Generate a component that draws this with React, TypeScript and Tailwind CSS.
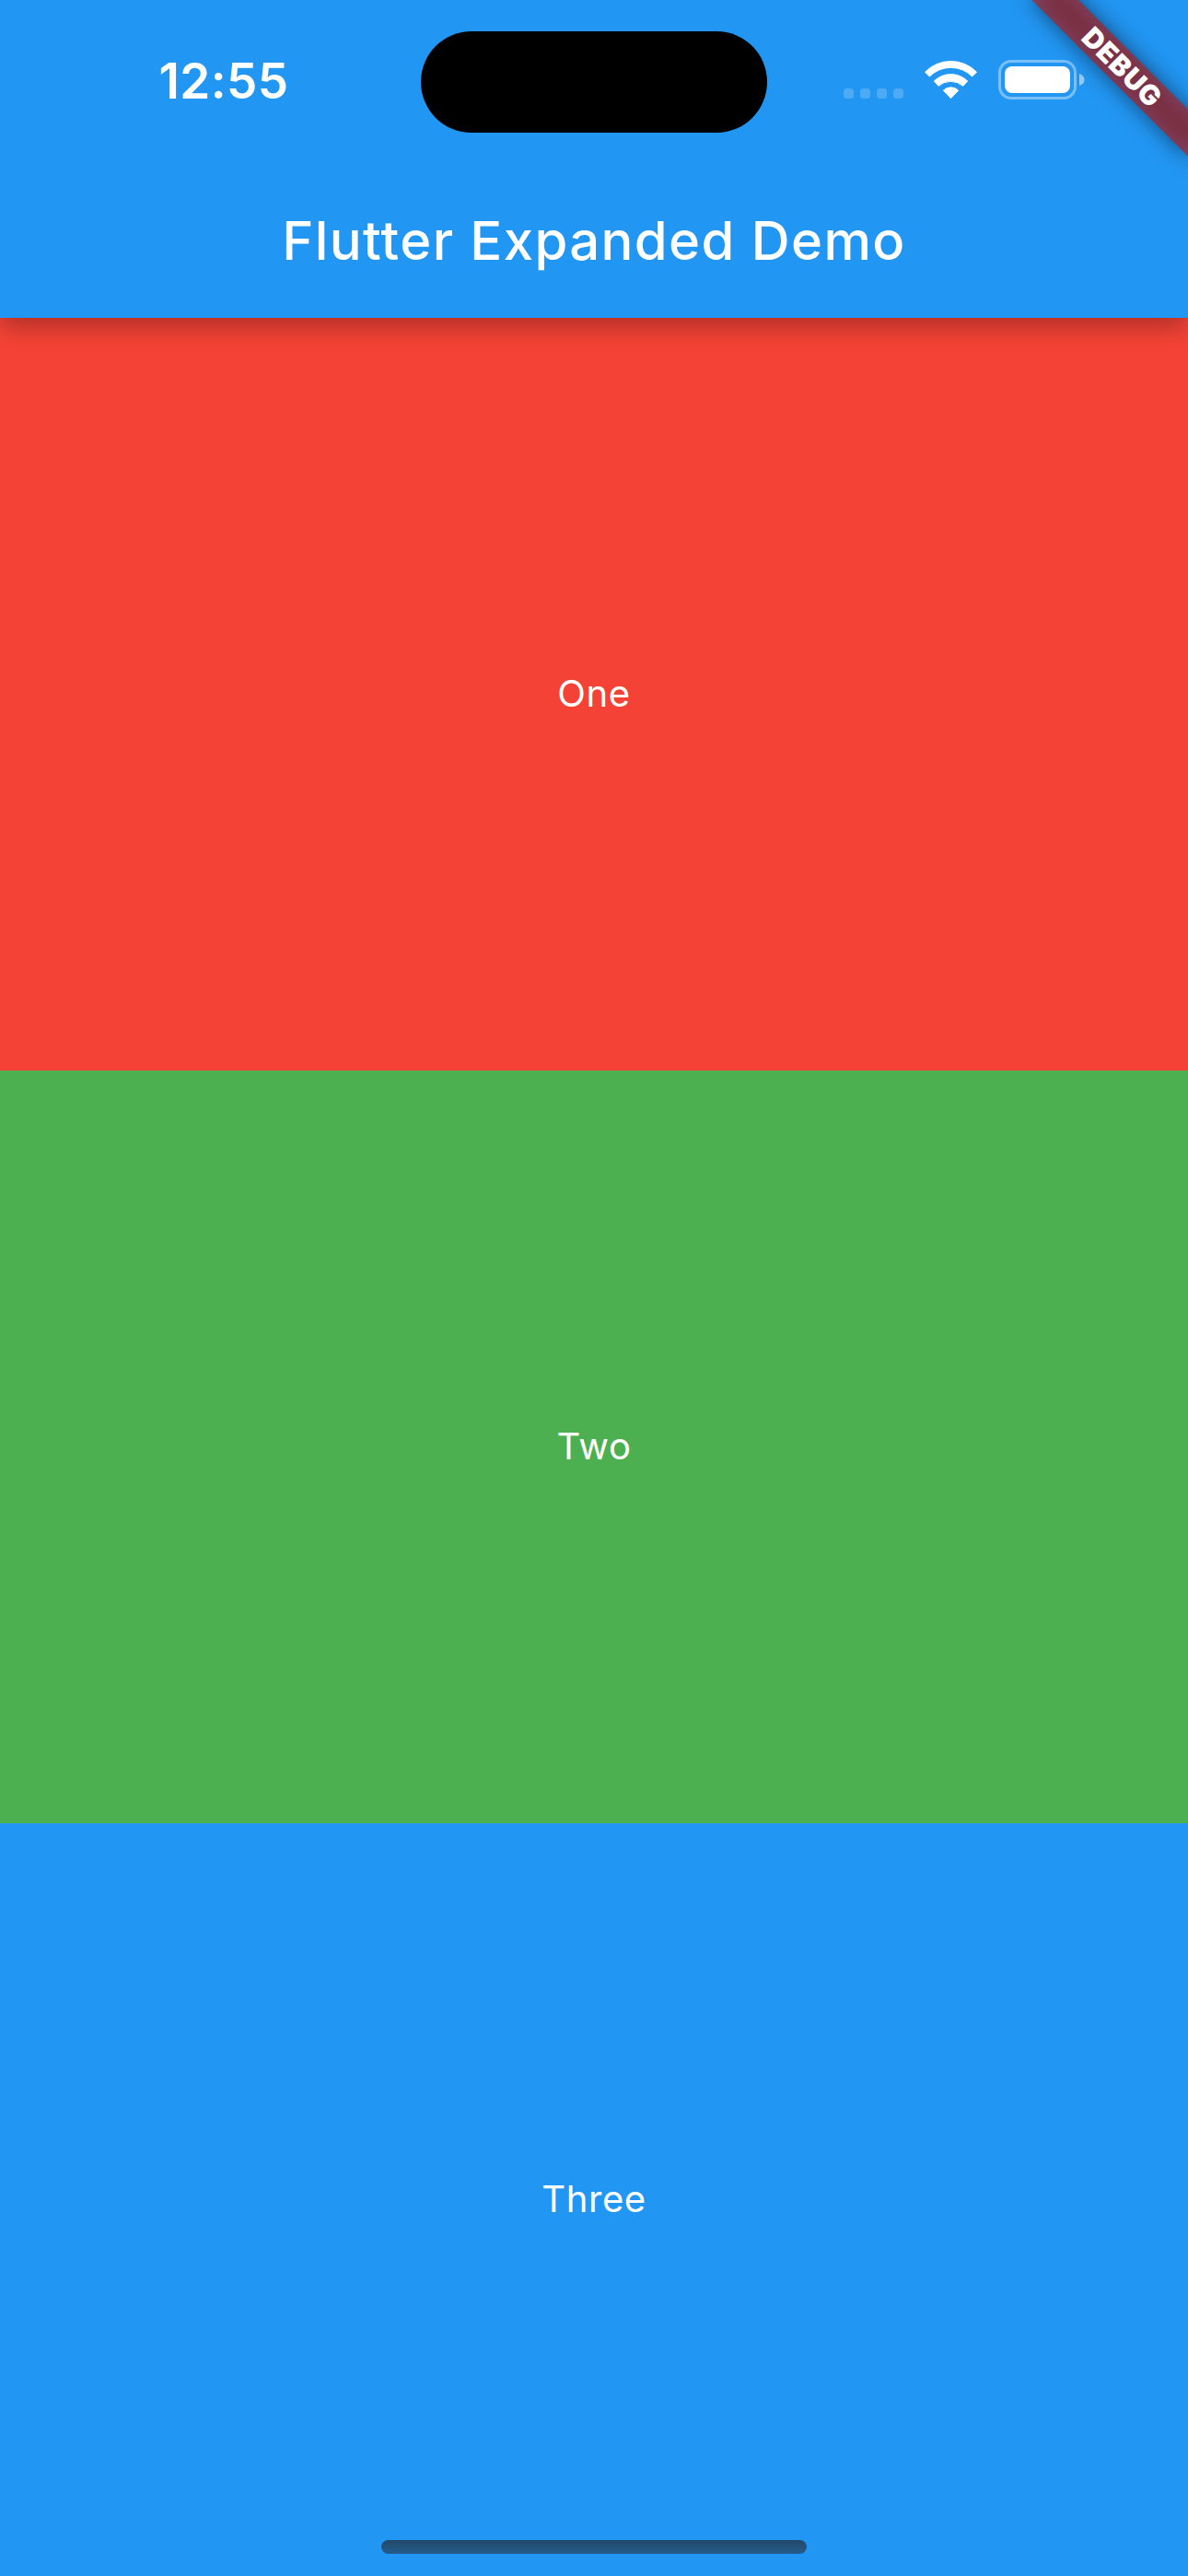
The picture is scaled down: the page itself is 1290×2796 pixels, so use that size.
const font = "font-['Inter','Liberation_Sans',sans-serif]";

function WifiIcon() {
  return (
    <svg className="h-[44px] w-[60px]" viewBox="336 72 180 132" fill="white">
      <path
        d="M343.5 114.500A118 118 0 0 1 511.500 114.500L497 129A98 98 0 0 0 358 129Z"
        stroke="white"
        strokeWidth="3"
        strokeLinejoin="round"
      />
      <path
        d="M373 144A78 78 0 0 1 482 144L467 160A61 61 0 0 0 387 160Z"
        stroke="white"
        strokeWidth="3"
        strokeLinejoin="round"
      />
      <path
        d="M403 174.500A35 35 0 0 1 452 174.500L427.500 200Z"
        stroke="white"
        strokeWidth="3"
        strokeLinejoin="round"
      />
    </svg>
  );
}

function BatteryIcon() {
  return (
    <div className="flex items-center gap-[3px]">
      <div className="h-[43px] w-[85px] rounded-[14px] border-3 border-white/40 p-[4px]">
        <div className="h-full w-full rounded-[8px] bg-white" />
      </div>
      <svg className="h-[13px] w-[6px]" viewBox="0 0 6 13">
        <path d="M0 0C3.500 1 5.500 3.500 5.500 6.500S3.500 12 0 13Z" fill="white" fillOpacity="0.5" />
      </svg>
    </div>
  );
}

function StatusBar() {
  return (
    <div className="flex h-[177px] items-start">
      <div className="flex h-[177px] w-[457px] justify-center pt-[57px] pl-[29px]">
        <span className="text-[53px] leading-[62px] font-semibold tracking-[0.4px]">12:55</span>
      </div>
      <div className="mt-[34px] h-[110px] w-[376px] rounded-full bg-black" />
      <div className="flex pt-[64px] pl-[83px]">
        <div className="flex gap-[7px] pt-[32px]">
          {[0, 1, 2, 3].map((i) => (
            <span key={i} className="size-[11px] rounded-[3.500px] bg-white/20" />
          ))}
        </div>
        <div className="ml-[21px] flex">
          <WifiIcon />
        </div>
        <div className="mt-px ml-[22px]">
          <BatteryIcon />
        </div>
      </div>
    </div>
  );
}

function DebugBanner() {
  return (
    <div className="pointer-events-none absolute inset-0 z-20 overflow-hidden">
      <div className="absolute top-0 left-[1290px] size-0 origin-top-left rotate-45">
        <div className="absolute top-[84px] left-[-120px] h-[36px] w-[240px] bg-black/50 blur-[12px]" />
        <div className="absolute top-[84px] left-[-120px] flex h-[36px] w-[240px] items-center justify-center bg-[#b71c1c]/63 pl-[2px]">
          <span className="text-[30px] leading-none font-black tracking-[0.7px]">DEBUG</span>
        </div>
      </div>
    </div>
  );
}

const panels = [
  { label: "One", color: "bg-[#f44336]" },
  { label: "Two", color: "bg-[#4caf50]" },
  { label: "Three", color: "bg-[#2196f3]" },
];

export default function App() {
  return (
    <div className={`relative flex h-[2796px] w-[1290px] flex-col overflow-hidden text-white ${font}`}>
      <header className="relative z-10 h-[345px] shrink-0 bg-[#2196f3] shadow-[0_12px_24px_-2px_rgba(0,0,0,0.28)]">
        <StatusBar />
        <div className="flex h-[168px] items-center justify-center">
          <h1 className="text-[58px] leading-none font-medium tracking-[1.4px]">Flutter Expanded Demo</h1>
        </div>
      </header>
      <main className="flex flex-1 flex-col">
        {panels.map((p) => (
          <section key={p.label} className={`flex flex-1 items-center justify-center pb-[2px] ${p.color}`}>
            <span className="text-[40px] leading-none font-normal tracking-[0.6px]">{p.label}</span>
          </section>
        ))}
      </main>
      <div className="absolute bottom-[24px] left-[414px] h-[15px] w-[462px] rounded-full bg-linear-to-b from-[#234768] to-[#235c8d]" />
      <DebugBanner />
    </div>
  );
}
